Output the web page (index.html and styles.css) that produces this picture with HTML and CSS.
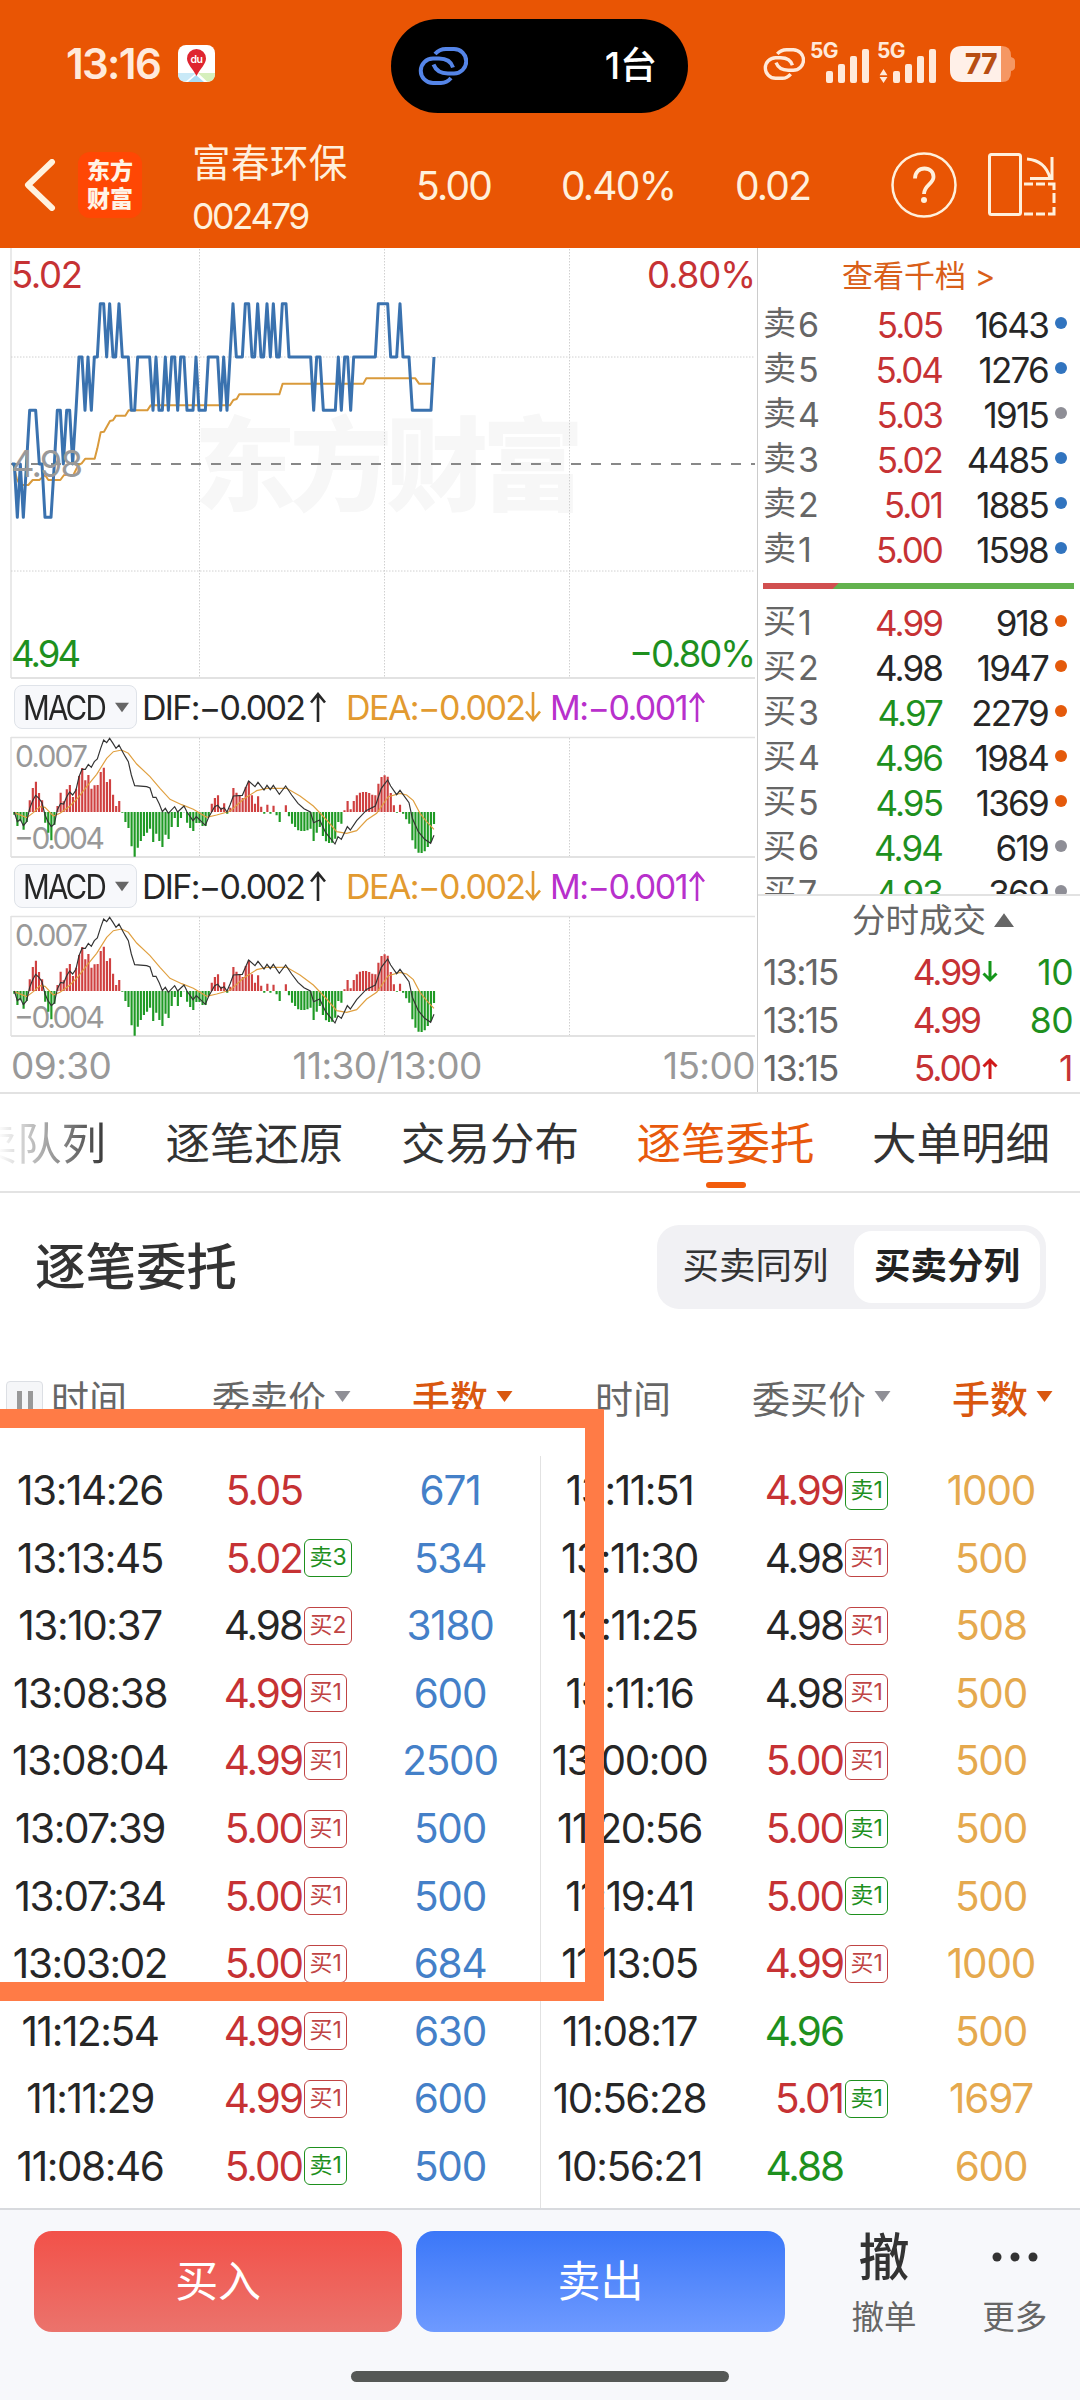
FILE: index.html
```html
<!DOCTYPE html>
<html lang="zh-CN">
<head>
<meta charset="utf-8">
<title>富春环保 002479</title>
<link rel="stylesheet" href="styles.css">
</head>
<body>
<svg class="defs" width="0" height="0">
  <symbol id="link" viewBox="0 0 50 38">
    <path d="M17 7C20 3.500 24 2 28 2h8a11.500 11.500 0 0 1 0 24.500h-6c-8 0-12.500-4-14.500-9M33 31c-3 3.500-6 5-10 5h-8a11.500 11.500 0 0 1 0-24.500h6c8 0 12.500 4 14 9" fill="none" stroke="currentColor" stroke-width="4"/>
  </symbol>
  <symbol id="up" viewBox="0 0 16 30"><path d="M8 30V2M1 10.500 8 2l7 8.500" fill="none" stroke="currentColor" stroke-width="2.600"/></symbol>
  <symbol id="tri" viewBox="0 0 16 11"><path d="M0 0h16L8 11z" fill="currentColor"/></symbol>
  <symbol id="bars" viewBox="0 0 43 34"><path d="M0 24q0-2 2-2h3q2 0 2 2v8q0 2-2 2H2q-2 0-2-2zM12 17q0-2 2-2h3q2 0 2 2v15q0 2-2 2h-3q-2 0-2-2zM24 9q0-2 2-2h3q2 0 2 2v23q0 2-2 2h-3q-2 0-2-2zM36 2q0-2 2-2h3q2 0 2 2v30q0 2-2 2h-3q-2 0-2-2z" fill="currentColor"/></symbol>
</svg>

<header class="header">
  <div class="status">
    <span class="clock">13:16</span>
    <svg class="map-icon" viewBox="0 0 37 37">
      <rect width="37" height="37" rx="8" fill="#fff"/>
      <path d="M0 28h18L8 36.500Q0 37 0 29z" fill="#c9e9f7"/><path d="M37 28H20l9 8.500q8 .500 8-8z" fill="#d5efbd"/><path d="M18 30l8 7H10z" fill="#a9dcf5"/>
      <path d="M18.500 31C15 24 9 19 9 13.500a9.500 9.500 0 0 1 19 0C28 19 22 24 18.500 31z" fill="#df2530"/>
      <text x="18.500" y="18" text-anchor="middle" font-size="10.500" font-weight="600" fill="#fff">du</text>
    </svg>
    <div class="island"><svg class="island-link"><use href="#link"/></svg><span>1台</span></div>
    <div class="signals">
      <svg class="sig-link"><use href="#link"/></svg>
      <span class="sig"><b>5G</b><svg><use href="#bars"/></svg></span>
      <span class="sig sig-b"><b>5G</b><svg class="updown" viewBox="0 0 9 16"><path d="M4.500 0 9 7H0zM4.500 16 9 9H0z" fill="currentColor"/></svg><svg><use href="#bars"/></svg></span>
      <svg class="battery" viewBox="0 0 65 36">
        <path d="M51 0h1q9 0 9 10v1q4 1 4 4v6q0 3-4 4v1q0 10-9 10h-1z" fill="#f59763"/>
        <path d="M51 0H12Q0 0 0 12v12q0 12 12 12h39z" fill="#fff0e8"/>
        <text x="31" y="28" text-anchor="middle" font-size="29" font-weight="800" textLength="32" lengthAdjust="spacingAndGlyphs" fill="#b84d12">77</text>
      </svg>
    </div>
  </div>
  <div class="quote">
    <svg class="back" viewBox="0 0 32 52"><path d="M28 3 4 26l24 23" fill="none" stroke="#fff2df" stroke-width="6" stroke-linecap="round" stroke-linejoin="round"/></svg>
    <div class="logo"><span>东方</span><span>财富</span></div>
    <div class="stock"><div class="name">富春环保</div><div class="code">002479</div></div>
    <span class="q q1">5.00</span><span class="q q2">0.40%</span><span class="q q3">0.02</span>
    <svg class="help" viewBox="0 0 66 66"><circle cx="33" cy="33" r="31.500" fill="none" stroke="currentColor" stroke-width="2.500"/><path d="M24 26.500c0-6 4-10 9.500-10s9 3.500 9 8.500c0 7-9.500 8-9.500 17" fill="none" stroke="currentColor" stroke-width="3.800"/><circle cx="33" cy="48" r="3" fill="currentColor"/></svg>
    <svg class="rotate" viewBox="0 0 68 64"><g fill="none" stroke="currentColor"><rect x="1.500" y="1.500" width="31" height="60" rx="2" stroke-width="3"/><path d="M39 6c12 1 20 8 23 19M64 4v21.500H42" stroke-width="3"/><path d="M36 31h9m3 0h9m3 0h6v6m0 3v10m0 4v7h-6m-3 0h-9m-3 0h-9" stroke-width="3"/></g></svg>
  </div>
</header>

<main>
<section class="market">
  <div class="charts">
    <svg class="price-chart" viewBox="0 248 757 435">
      <g class="frame"><path d="M11 248v430" stroke-width="1.500"/><path d="M11 678H755" stroke="#d2d2d2" stroke-width="2"/></g>
      <text class="mark" x="194" y="503" textLength="390">东方财富</text>
      <path class="dots" d="M11 357H755M11 571H755M199.500 249V678M384.500 249V678M569.500 249V678"/>
      <path d="M11 464H755" stroke="#888" stroke-width="2" stroke-dasharray="10 10"/>
      <g transform="translate(0 245) scale(.33333)" fill="none" stroke-linejoin="round">
        <path stroke="#d99a3b" stroke-width="6" d="M40 657 50 700 60 720H85L98 705H118L135 690 145 705H181L192 690H220L235 660 245 655 256 641H284L292 610 302 562 312 560 330 528 339 526 348 512H376L386 496H442L452 481H690L700 465 710 462 718 448H838L848 416H1090L1099 400H1246L1257 416H1298"/>
        <path stroke="#3a72af" stroke-width="9" d="M36 657H43L52 817 61 657 70 817 89 496H107L118 657H126L135 817H153L163 657 172 496H181L190 657 200 496H209L218 657 228 496 237 336H246L255 496 264 336 274 496 283 336H292L301 176H311L320 336 329 176 339 336H347L357 176 367 336H385L394 496H404L413 336H449L459 496 468 336 477 496H487L496 336 505 496 515 336H524L533 496 542 336H552L561 496H579L588 336 597 496H616L625 336H653L662 496 671 336 681 496 690 336 699 176 709 336H727L736 176H746L756 336H764L773 176 783 336H791L801 176 811 336 820 176 830 336H838L847 176H858L867 336H932L941 496 950 336H960L970 496H1006L1015 336 1024 496 1034 336H1043L1052 496 1061 336H1126L1135 176H1163L1172 336H1190L1200 176 1209 336H1227L1237 496H1293L1302 336"/>
      </g>
      <g class="axis">
        <text x="11" y="288" textLength="72" fill="#c63234">5.02</text><text x="647" y="288" textLength="109" fill="#c63234">0.80%</text>
        <text x="11" y="477" textLength="72" fill="#999">4.98</text>
        <text x="11" y="667" textLength="70" fill="#1e901e">4.94</text><text x="629" y="667" textLength="127" fill="#1e901e">−0.80%</text>
      </g>
    </svg>
    <div class="ind"><button class="pick"><span>MACD</span><svg><use href="#tri"/></svg></button><span class="dif">DIF:−0.002</span><svg class="arr a1"><use href="#up"/></svg><span class="dea">DEA:−0.002</span><svg class="arr down dea"><use href="#up"/></svg><span class="mm">M:−0.001</span><svg class="arr mm"><use href="#up"/></svg></div>
    <svg class="macd" viewBox="0 735 757 124"></svg>
    <div class="ind"><button class="pick"><span>MACD</span><svg><use href="#tri"/></svg></button><span class="dif">DIF:−0.002</span><svg class="arr a1"><use href="#up"/></svg><span class="dea">DEA:−0.002</span><svg class="arr down dea"><use href="#up"/></svg><span class="mm">M:−0.001</span><svg class="arr mm"><use href="#up"/></svg></div>
    <svg class="macd" viewBox="0 735 757 124"></svg>
    <div class="times"><span>09:30</span><span>11:30/13:00</span><span>15:00</span></div>
  </div>
  <aside class="book">
    <div class="book-head">查看千档&nbsp;<i>&gt;</i></div>
    <div class="levels">
      <div class="lv"><span>卖<i>6</i></span><b class="red">5.05</b><em>1643</em><u class="d-blue"></u></div>
      <div class="lv"><span>卖<i>5</i></span><b class="red">5.04</b><em>1276</em><u class="d-blue"></u></div>
      <div class="lv"><span>卖<i>4</i></span><b class="red">5.03</b><em>1915</em><u class="d-gray"></u></div>
      <div class="lv"><span>卖<i>3</i></span><b class="red">5.02</b><em>4485</em><u class="d-blue"></u></div>
      <div class="lv"><span>卖<i>2</i></span><b class="red">5.01</b><em>1885</em><u class="d-blue"></u></div>
      <div class="lv"><span>卖<i>1</i></span><b class="red">5.00</b><em>1598</em><u class="d-blue"></u></div>
      <div class="ratio"></div>
      <div class="lv"><span>买<i>1</i></span><b class="red">4.99</b><em>918</em><u class="d-org"></u></div>
      <div class="lv"><span>买<i>2</i></span><b>4.98</b><em>1947</em><u class="d-org"></u></div>
      <div class="lv"><span>买<i>3</i></span><b class="green">4.97</b><em>2279</em><u class="d-org"></u></div>
      <div class="lv"><span>买<i>4</i></span><b class="green">4.96</b><em>1984</em><u class="d-org"></u></div>
      <div class="lv"><span>买<i>5</i></span><b class="green">4.95</b><em>1369</em><u class="d-org"></u></div>
      <div class="lv"><span>买<i>6</i></span><b class="green">4.94</b><em>619</em><u class="d-gray"></u></div>
      <div class="lv"><span>买<i>7</i></span><b class="green">4.93</b><em>369</em><u class="d-gray"></u></div>
    </div>
    <div class="ticks">
      <div class="ticks-head">分时成交<svg><use href="#tri"/></svg></div>
      <div class="tick"><span>13:15</span><b class="red">4.99</b><svg class="down" viewBox="0 0 16 22"><path d="M8 22V3M1.500 9.500 8 3l6.500 6.500" fill="none" stroke="#14961a" stroke-width="3"/></svg><em class="green">10</em></div>
      <div class="tick"><span>13:15</span><b class="red">4.99</b><i></i><em class="green">80</em></div>
      <div class="tick"><span>13:15</span><b class="red">5.00</b><svg viewBox="0 0 16 22"><path d="M8 22V3M1.500 9.500 8 3l6.500 6.500" fill="none" stroke="#d01818" stroke-width="3"/></svg><em class="red">1</em></div>
    </div>
  </aside>
</section>

<nav class="tabs"><span class="cut">买卖队列</span><span>逐笔还原</span><span>交易分布</span><span class="on">逐笔委托</span><span>大单明细</span></nav>

<section class="orders">
  <div class="title-row"><h2>逐笔委托</h2><div class="toggle"><span>买卖同列</span><span class="sel">买卖分列</span></div></div>
  <div class="heads">
    <div class="head"><span class="pause"><i></i><i></i></span><span class="h1">时间</span><span>委卖价<svg class="g"><use href="#tri"/></svg></span><span class="org">手数<svg><use href="#tri"/></svg></span></div>
    <div class="head"><span class="h1">时间</span><span>委买价<svg class="g"><use href="#tri"/></svg></span><span class="org">手数<svg><use href="#tri"/></svg></span></div>
  </div>
  <div class="cols">
    <div class="col sell">
      <div class="row"><span>13:14:26</span><b class="red">5.05</b><i></i><em>671</em></div>
      <div class="row"><span>13:13:45</span><b class="red">5.02</b><i class="tg">卖3</i><em>534</em></div>
      <div class="row"><span>13:10:37</span><b>4.98</b><i class="tr">买2</i><em>3180</em></div>
      <div class="row"><span>13:08:38</span><b class="red">4.99</b><i class="tr">买1</i><em>600</em></div>
      <div class="row"><span>13:08:04</span><b class="red">4.99</b><i class="tr">买1</i><em>2500</em></div>
      <div class="row"><span>13:07:39</span><b class="red">5.00</b><i class="tr">买1</i><em>500</em></div>
      <div class="row"><span>13:07:34</span><b class="red">5.00</b><i class="tr">买1</i><em>500</em></div>
      <div class="row"><span>13:03:02</span><b class="red">5.00</b><i class="tr">买1</i><em>684</em></div>
      <div class="row"><span>11:12:54</span><b class="red">4.99</b><i class="tr">买1</i><em>630</em></div>
      <div class="row"><span>11:11:29</span><b class="red">4.99</b><i class="tr">买1</i><em>600</em></div>
      <div class="row"><span>11:08:46</span><b class="red">5.00</b><i class="tg">卖1</i><em>500</em></div>
    </div>
    <div class="col buy">
      <div class="row"><span>13:11:51</span><b class="red">4.99</b><i class="tg">卖1</i><em>1000</em></div>
      <div class="row"><span>13:11:30</span><b>4.98</b><i class="tr">买1</i><em>500</em></div>
      <div class="row"><span>13:11:25</span><b>4.98</b><i class="tr">买1</i><em>508</em></div>
      <div class="row"><span>13:11:16</span><b>4.98</b><i class="tr">买1</i><em>500</em></div>
      <div class="row"><span>13:00:00</span><b class="red">5.00</b><i class="tr">买1</i><em>500</em></div>
      <div class="row"><span>11:20:56</span><b class="red">5.00</b><i class="tg">卖1</i><em>500</em></div>
      <div class="row"><span>11:19:41</span><b class="red">5.00</b><i class="tg">卖1</i><em>500</em></div>
      <div class="row"><span>11:13:05</span><b class="red">4.99</b><i class="tr">买1</i><em>1000</em></div>
      <div class="row"><span>11:08:17</span><b class="green">4.96</b><i></i><em>500</em></div>
      <div class="row"><span>10:56:28</span><b class="red">5.01</b><i class="tg">卖1</i><em>1697</em></div>
      <div class="row"><span>10:56:21</span><b class="green">4.88</b><i></i><em>600</em></div>
    </div>
  </div>
  <div class="highlight"></div>
</section>
</main>

<footer class="footer">
  <div class="actions">
    <button class="btn buy-btn">买入</button><button class="btn sell-btn">卖出</button>
    <div class="act"><strong>撤</strong><span>撤单</span></div>
    <div class="act"><svg viewBox="0 0 46 10"><g fill="#333"><circle cx="5" cy="5" r="4.500"/><circle cx="23" cy="5" r="4.500"/><circle cx="41" cy="5" r="4.500"/></g></svg><span>更多</span></div>
  </div>
  <div class="home"></div>
</footer>
<script src="charts.js"></script>
</body>
</html>
```

FILE: styles.css
```css
* { box-sizing: border-box; }
body { margin: 0; width: 1080px; height: 2400px; overflow: hidden; display: flex; flex-direction: column; background: #fff; color: #262626; font-family: Inter, "Noto Sans CJK SC", sans-serif; letter-spacing: -0.035em; }
b, i, em, u { font-weight: 400; font-style: normal; text-decoration: none; }
button { border: 0; font: inherit; letter-spacing: inherit; color: inherit; padding: 0; }
svg { display: block; flex: none; }
.defs { position: absolute; }
.red { color: #c63234; }
.green { color: #1e901e; }
.down { transform: rotate(180deg); }

/* Header */
.header { height: 248px; flex: none; background: #e95504; color: #fff0dc; }
.status { height: 127px; display: flex; align-items: center; padding-left: 66px; }
.clock { width: 112px; font-size: 42px; font-weight: 600; color: #ffeadb; letter-spacing: -0.04em; }
.map-icon { width: 37px; height: 37px; }
.island { width: 297px; height: 94px; margin: 5px 75px 0 176px; border-radius: 47px; background: #000; display: flex; align-items: center; justify-content: space-between; padding: 0 31px 0 27px; color: #fff; font-size: 37px; font-weight: 500; letter-spacing: 0; }
.island span { padding-bottom: 6px; }
.island-link { width: 50px; height: 38px; color: #5585e8; }
.signals { display: flex; align-items: center; color: #ffe9da; }
.sig-link { width: 42px; height: 32px; margin-right: 5px; }
.sig { width: 67px; height: 38px; display: flex; align-items: flex-end; position: relative; padding-left: 16px; }
.sig b { position: absolute; left: 0; top: -6px; font-size: 21px; line-height: 24px; font-weight: 700; }
.sig svg { width: 43px; height: 34px; }
.sig .updown { position: absolute; left: 2px; bottom: 0; width: 9px; height: 14px; }
.sig-b { width: 73px; }
.battery { width: 65px; height: 36px; }
.quote { height: 121px; display: flex; align-items: center; padding: 0 24px 8px; }
.back { width: 32px; height: 52px; margin-right: 22px; margin-top: 2px; }
.logo { width: 64px; height: 66px; margin-top: 2px; border-radius: 12px; background: #ff4704; display: flex; flex-direction: column; justify-content: center; font-size: 23px; line-height: 28px; font-weight: 900; text-align: center; color: #fff3e6; letter-spacing: 0; }
.stock { width: 223px; padding-left: 50px; }
.name { font-size: 38.500px; line-height: 54px; letter-spacing: 0.01em; margin-top: 12px; }
.code { font-size: 35.500px; line-height: 54px; letter-spacing: -0.07em; }
.q { font-size: 39px; margin-top: 3px; letter-spacing: -0.045em; flex: none; }
.q1 { padding-left: 51px; width: 196px; }
.q2 { width: 174px; }
.q3 { width: 156px; }
.help { width: 66px; height: 66px; margin-top: 2px; }
.rotate { width: 68px; height: 64px; margin: 2px 0 0 31px; }

/* Charts and order book */
.market { height: 846px; display: flex; border-bottom: 2px solid #e2e2e2; flex: none; }
.charts { width: 757px; }
.price-chart { width: 757px; height: 435px; }
.frame path { stroke: #e2e2e2; fill: none; }
.dots { stroke: #d0d0d0; stroke-width: 1; stroke-dasharray: 1.500 1.500; fill: none; }
.mark { font-size: 102px; font-weight: 900; fill: #f7f7f7; letter-spacing: 0; }
.axis text { font-size: 36.500px; letter-spacing: 0; }
.ind { height: 50px; margin: 0 0 2px; padding: 2px 0 4px 14px; display: flex; align-items: center; font-size: 34px; white-space: nowrap; letter-spacing: -0.05em; }
.charts .macd { width: 757px; height: 124px; }
.charts .macd + .ind { margin-top: 3px; }
.pick { width: 123px; height: 44px; border: 1px solid #dfe3e9; border-radius: 8px; background: #f7f8fb; display: flex; align-items: center; padding-left: 8px; letter-spacing: -0.06em; }
.pick span { width: 92px; text-align: left; transform: scaleX(.87); transform-origin: 0 50%; }
.pick svg { width: 14px; height: 11px; color: #666; }
.dif { width: 173px; padding-left: 5px; }
.arr { width: 16px; height: 30px; }
.a1 { margin-right: 20px; }
span.dea { width: 179px; letter-spacing: -0.045em; }
.dea { color: #e29a30; }
span.mm { width: 148px; padding-left: 9px; letter-spacing: -0.045em; }
.mm { color: #b830cc; }
.times { height: 54px; padding: 0 2px 0 11px; display: flex; justify-content: space-between; align-items: center; font-size: 37px; color: #999; }
.book { width: 323px; border-left: 1.500px solid #ccc; display: flex; flex-direction: column; padding-left: 5px; }
.book-head { height: 55px; padding-left: 79px; padding-top: 3px; font-size: 31px; line-height: 50px; letter-spacing: 0; color: #d95f1a; }
.levels { height: 593px; overflow: hidden; }
.lv { height: 45px; display: flex; align-items: center; font-size: 35px; }
.lv span { width: 80px; font-size: 33px; line-height: 45px; color: #666; display: flex; align-items: center; gap: 2px; letter-spacing: 0; padding-bottom: 4px; }
.lv span i { font-size: 34px; padding-top: 3px; }
.lv b { width: 99px; text-align: right; letter-spacing: -0.055em; }
.lv em { width: 106px; text-align: right; letter-spacing: -0.05em; }
.lv u { width: 12px; height: 12px; border-radius: 50%; margin-left: 7px; margin-top: -4px; }
.d-blue { background: #3174bf; }
.d-gray { background: #8e8e96; }
.d-org { background: #e45a0b; }
.ratio { height: 6px; margin: 10px 0 12px; width: 311px; background: linear-gradient(135deg, #d14f4f 53px, #63b24e 54px); }
.ticks { border-top: 2px solid #e2e2e2; margin-left: -5px; padding-left: 5px; }
.ticks-head { height: 52px; padding: 0 0 5px 89px; display: flex; align-items: center; font-size: 33.500px; line-height: 46px; color: #666; letter-spacing: 0; }
.ticks-head svg { width: 20px; height: 14px; margin-left: 8px; transform: rotate(180deg); }
.tick { height: 48px; display: flex; align-items: center; font-size: 35.500px; }
.tick span { width: 115px; color: #666; letter-spacing: -0.045em; }
.tick b { width: 102px; text-align: right; letter-spacing: -0.06em; }
.tick svg, .tick i { width: 16px; height: 22px; margin-left: 2px; }
.tick em { width: 75px; text-align: right; }

/* Tabs */
.tabs { height: 99px; flex: none; border-bottom: 2px solid #e3e3e3; display: flex; justify-content: flex-end; gap: 57.500px; padding-right: 30px; font-size: 44.500px; line-height: 100px; letter-spacing: 0; color: #333; white-space: nowrap; overflow: hidden; }
.tabs .cut { background: linear-gradient(90deg, #fff 70px, #333 180px); background-clip: text; color: transparent; margin-right: 2px; }
.on { color: #e8590c; position: relative; }
.on::after { content: ""; position: absolute; left: 70px; bottom: 3px; width: 40px; height: 6px; border-radius: 3px; background: #f25c0c; }

/* Order tables */
.orders { position: relative; height: 1015px; }
.title-row { height: 147px; display: flex; justify-content: space-between; align-items: center; padding: 0 34px 0 35px; }
h2 { margin: 0; padding-bottom: 7px; font-size: 50.500px; font-weight: 500; letter-spacing: 0; color: #333; }
.toggle { width: 389px; height: 84px; border-radius: 22px; background: #f1f1f4; padding: 6px; display: flex; font-size: 36.500px; line-height: 70px; letter-spacing: 0; text-align: center; color: #333; }
.toggle span { width: 191px; padding-right: 6px; }
.toggle .sel { width: 186px; padding: 0; border-radius: 18px; background: #fff; font-weight: 700; color: #222; }
.heads, .cols { display: flex; }
.head { width: 540px; height: 117px; padding-bottom: 5px; display: grid; grid-template-columns: 212px 200px 128px; align-items: center; font-size: 38px; letter-spacing: 0; color: #666; position: relative; }
.head .h1 { padding-left: 51px; }
.head + .head .h1 { padding-left: 55px; }
.head span { display: flex; align-items: center; gap: 8px; }
.head svg { width: 17px; height: 11px; }
.head .g { color: #8f8f96; }
.head .org { color: #d9570f; font-weight: 500; }
.pause { position: absolute !important; left: 6px; top: 41px; width: 37px; height: 38px; border: 1px solid #dcdfe4; border-radius: 4px; background: #f5f6f8; justify-content: center; gap: 6px !important; }
.pause i { width: 5px; height: 19px; background: #999; }
.cols { height: 752px; margin-top: -1px; }
.col { width: 540px; padding-top: 1px; }
.buy { border-left: 1.500px solid #e2e2e2; }
.row { height: 67.550px; display: grid; grid-template-columns: 180px 122px 58px 180px; align-items: center; font-size: 40.500px; text-align: center; }
.row span { letter-spacing: -0.035em; }
.buy .row span { margin-left: -3px; }
.row b { text-align: right; letter-spacing: -0.05em; }
.row em { letter-spacing: -0.03em; }
.row .tr, .row .tg { justify-self: start; margin-left: 2px; height: 38px; padding: 0 4.500px; border: 1.500px solid; border-radius: 6px; font-size: 23px; line-height: 34px; letter-spacing: 0; }
.tr { color: #c04444; }
.tg { color: #1e901e; }
.sell em { color: #4480c8; }
.buy em { color: #e5a94e; }
.highlight { position: absolute; left: -20px; top: 216px; width: 624px; height: 592px; border: 19px solid #ff7b46; }

/* Bottom bar */
.footer { height: 192px; flex: none; border-top: 2px solid #d8dade; background: #f7f8fb; }
.actions { height: 161px; padding: 21px 0 0 34px; display: flex; align-items: flex-start; }
.btn { width: 369px; height: 101px; margin-right: 14px; padding-bottom: 7px; border-radius: 18px; color: #fff; font-size: 43px; letter-spacing: 0; }
.buy-btn { background: linear-gradient(#f25149, #eb736c); }
.sell-btn { background: linear-gradient(#3b77f8, #6e9aff); margin-right: 34px; }
.act { width: 131px; height: 107px; display: flex; flex-direction: column; align-items: center; justify-content: space-between; color: #666; font-size: 32.500px; line-height: 40px; letter-spacing: 0; }
.act strong { font-size: 51px; line-height: 54px; font-weight: 500; color: #333; }
.act svg { width: 46px; height: 10px; margin-top: 21px; }
.home { width: 378px; height: 11px; border-radius: 6px; background: #555856; margin: 0 auto; }
```

FILE: charts.js
```js
// Histogram values, one per trading minute, in plot units above or below zero.
const bars = [
  -8, -42, -28, -53, -30, 35, 72, 91, 57, 35, -32, -62, -85, -38, 18, 58, 32, 68, 81, 45,
  70, 108, 132, 95, 111, 70, 80, 81, 120, 133, 90, 98, 52, 18, 33, -2, -30, -48, -103, -134,
  -107, -87, -72, -62, -50, -90, -65, -87, -105, -68, -81, -45, -18, -45, -18, -1, -32, -48, -57, -33,
  -33, -42, -42, -15, 25, 42, 50, 13, 26, -5, 13, 72, 58, 50, 42, 75, 92, 50, 25, 47,
  16, -5, 22, -5, 19, -10, -30, 0, 20, -13, -35, -45, -55, -57, -57, -55, -50, -87, -62, -45,
  -72, -88, -93, -92, -80, -30, -35, 5, 33, 8, 33, 50, 58, 60, 60, 57, 52, 50, 85, 105,
  110, 106, 57, 20, -2, 22, -5, -22, -35, -85, -110, -122, -123, -118, -105, -90, -36
];
const dif = "M43 396 52 425 61 418 70 437 80 425 89 385 98 362 107 346 117 355 126 368 135 405 144 425 154 440 163 432 172 390 182 370 191 372 200 350 209 336 218 345 228 330 237 290 246 268 256 268 265 253 274 262 283 245 292 237 302 205 311 180 320 188 329 175 339 190 348 205 357 195 366 212 376 230 385 245 394 285 404 317 440 320 450 324 459 352 468 352 478 372 487 395 496 385 505 400 524 380 533 396 552 378 561 396 579 422 589 410 616 436 626 412 644 380 653 376 663 388 672 383 681 396 690 375 700 348 727 346 746 303 765 320 774 307 792 330 801 316 811 329 820 316 838 343 857 318 875 345 894 370 912 386 931 396 941 428 959 420 977 458 1005 492 1014 470 1024 478 1042 440 1051 450 1070 422 1098 392 1126 378 1144 325 1163 300 1172 318 1190 344 1200 331 1227 368 1237 415 1255 455 1274 478 1292 490 1302 466";
const dea = "M43 398 80 413 100 398 120 380 135 382 160 408 180 400 210 378 235 352 260 320 290 283 320 235 340 215 365 210 385 220 410 252 450 290 480 325 510 358 545 374 580 388 620 412 650 405 690 394 730 358 770 332 800 325 860 325 900 348 940 378 980 420 1010 455 1040 460 1070 452 1100 420 1130 400 1165 350 1200 340 1220 345 1240 362 1260 400 1280 425 1302 448";

const columns = (keep) => bars
  .map((v, i) => (keep(v) ? `M${(43 + i * 9.257).toFixed(1)} 396v${-v}` : ""))
  .join("");

const plot = `
  <g class="frame"><path d="M11 737.500H755M11 737v120" stroke-width="1.500"/><path d="M11 857H755" stroke-width="2"/></g>
  <path class="dots" d="M199.500 738V856M384.500 738V856M569.500 738V856"/>
  <g font-size="30" fill="#999" letter-spacing="0"><text x="15" y="767" textLength="73">0.007</text><text x="14" y="849" textLength="91">−0.004</text></g>
  <g transform="translate(0 680) scale(.33333)" fill="none">
    <path d="${columns((v) => v > 0)}" stroke="#cf4040" stroke-width="6.500"/>
    <path d="${columns((v) => v < 0)}" stroke="#1f9a25" stroke-width="6.500"/>
    <path d="${dea}" stroke="#e0a040" stroke-width="3.500"/>
    <path d="${dif}" stroke="#333" stroke-width="3.500"/>
  </g>`;

document.querySelectorAll(".macd").forEach((svg) => { svg.innerHTML = plot; });
```
